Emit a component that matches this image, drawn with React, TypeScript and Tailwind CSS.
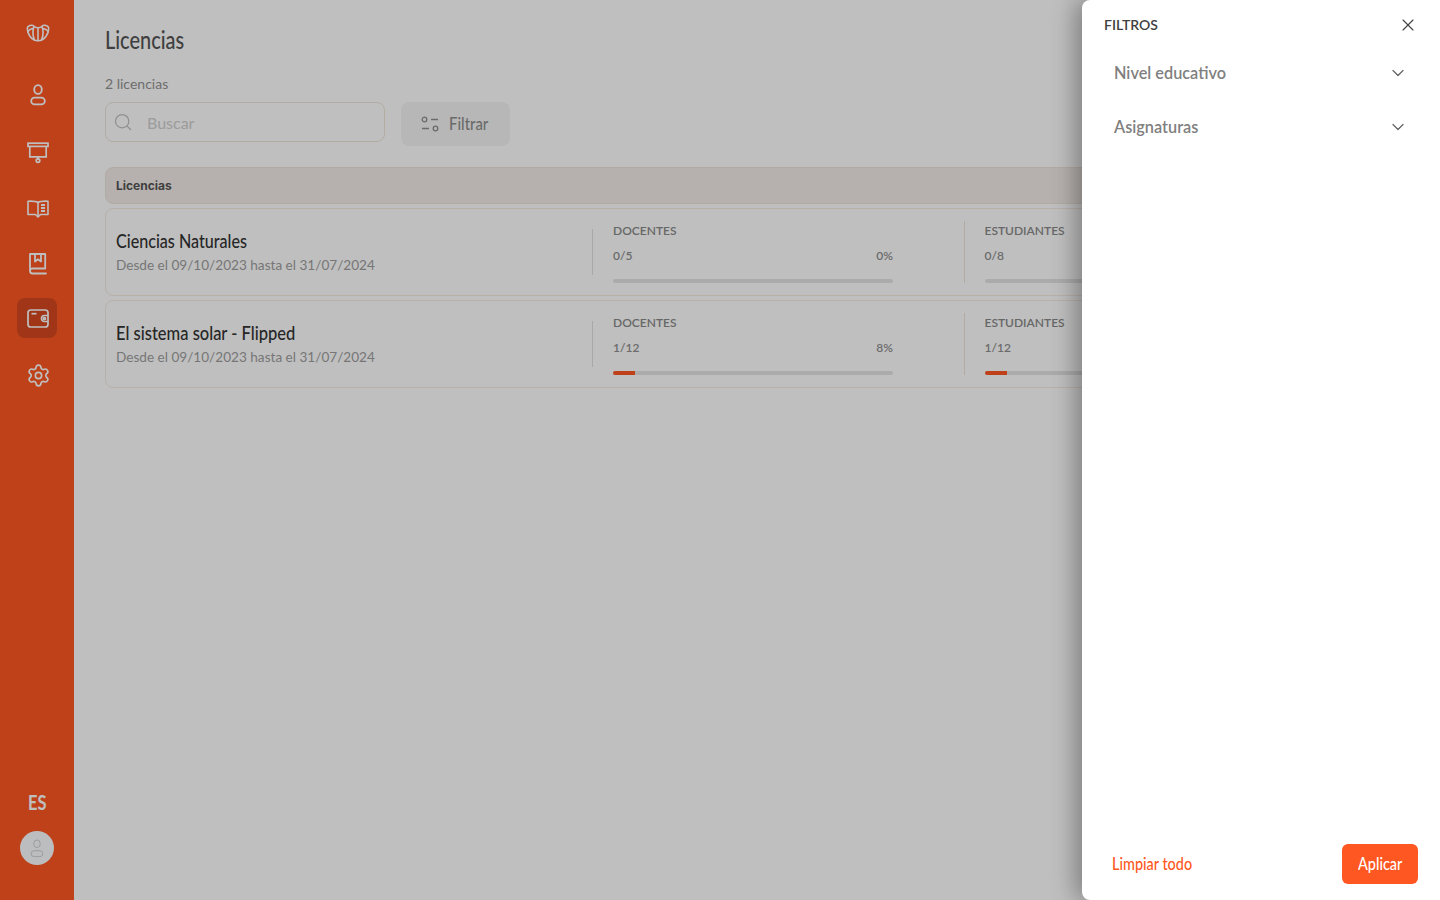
import { ChevronDown, Search, Settings, X } from "lucide-react";

const narrow = "font-['Lato',sans-serif] whitespace-nowrap origin-left font-medium";

function LogoIcon() {
  return (
    <svg width="24" height="18" viewBox="0 0 24 18" fill="none" stroke="currentColor" strokeWidth="1.6" strokeLinejoin="round" strokeLinecap="round">
      <path d="M1.600 3C3.800 .8 6.800 .9 8 2.200c1.600 2 6.400 2 8 0C17.200 .9 20.200 .8 22.400 3c1.100 5.600-3.400 13.800-10.400 13.800S.5 8.600 1.600 3Z" />
      <path d="M8 2.500c-1.400 4-1.400 9 .4 13.400M16 2.500c1.400 4 1.400 9-.4 13.400M12 4.500v12M1.800 7.500C3 6 4.500 5 6.400 4.500M22.200 7.500C21 6 19.500 5 17.600 4.500" />
    </svg>
  );
}

function UserIcon({ small = false }: { small?: boolean }) {
  return (
    <svg width={small ? 14 : 16} height={small ? 19 : 22} viewBox="0 0 16 22" fill="none" stroke="currentColor" strokeWidth={small ? 1 : 1.8}>
      <ellipse cx="8" cy="5.500" rx="3.800" ry="4.400" />
      <rect x="1.200" y="13.600" width="13.600" height="6.800" rx="3.400" />
    </svg>
  );
}

function ProjectorIcon() {
  return (
    <svg width="22" height="22" viewBox="0 0 22 22" fill="none" stroke="currentColor" strokeWidth="1.700">
      <rect x="1" y="1.200" width="20" height="3.200" />
      <path d="M2.800 4.400v10.400h16.400V4.400M11 14.800v2" />
      <circle cx="11" cy="18.600" r="1.800" />
    </svg>
  );
}

function BookOpenIcon() {
  return (
    <svg width="22" height="18" viewBox="0 0 22 18" fill="none" stroke="currentColor" strokeWidth="1.600" strokeLinejoin="round">
      <path d="M11 2.500C9.500 1.400 6 1 1 1.200v13.300h7.500L11 17l2.500-2.500H21V1.200C16 1 12.500 1.400 11 2.500Z" />
      <path d="M11 2.500V16" />
      <path d="M14 5h4M14 8h4M14 11h4" strokeWidth="2" />
    </svg>
  );
}

function BookIcon() {
  return (
    <svg width="18" height="22" viewBox="0 0 18 22" fill="none" stroke="currentColor" strokeWidth="1.800" strokeLinejoin="round" strokeLinecap="round">
      <path d="M1 17.500V1h15.200v14.500H3.500C2 15.500 1 16.400 1 17.800 1 19.400 2 20.500 3.500 20.500h13.500" />
      <path d="M6 1v7.500l3-2.200 3 2.200V1" />
    </svg>
  );
}

function WalletIcon() {
  return (
    <svg width="22" height="19" viewBox="0 0 22 19" fill="none" stroke="currentColor" strokeWidth="1.700">
      <rect x="1" y="1" width="20" height="17" rx="2.800" />
      <path d="M4.500 4.700h5" />
      <path d="M21 6.500h-3.500a3 3 0 0 0 0 6H21" />
      <circle cx="17.500" cy="9.500" r="1" />
    </svg>
  );
}

function SlidersIcon() {
  return (
    <svg width="18" height="16" viewBox="0 0 18 16" fill="none" stroke="currentColor" strokeWidth="1.300">
      <circle cx="3.500" cy="3.500" r="2.300" />
      <path d="M10 3.500h7M1 12.500h7" />
      <circle cx="14.500" cy="12.500" r="2.300" />
    </svg>
  );
}

function Stat({ label, count, pct, fill }: { label: string; count: string; pct: string; fill: number }) {
  return (
    <div className="w-[280px] shrink-0 flex flex-col text-[#8a8a8a]">
      <span className="text-[12px] leading-[16px] font-semibold">{label}</span>
      <div className="flex justify-between mt-[9px] text-[12px] leading-[16px] font-semibold text-[#909090]">
        <span>{count}</span>
        <span>{pct}</span>
      </div>
      <div className="mt-[15px] h-[4px] rounded-full bg-[#e4e4e4] overflow-hidden">
        <div className="h-full bg-[#ff5722]" style={{ width: fill + "%" }} />
      </div>
    </div>
  );
}

function Row({ title, titleScale, teachers, students }: { title: string; titleScale: string; teachers: [string, string, number]; students: [string, string, number] }) {
  return (
    <div className="h-[88px] rounded-lg border border-[#f5ece0] flex items-center pl-[10px]">
      <div className="w-[476px] shrink-0">
        <div className={`${narrow} ${titleScale} -mt-[1px] text-[20px] leading-[24px] text-[#333333]`}>{title}</div>
        <div className="mt-[3px] text-[13.6px] leading-[20px] text-[#9e9e9e]">Desde el 09/10/2023 hasta el 31/07/2024</div>
      </div>
      <div className="w-px h-[46px] bg-[#e0e0e0] shrink-0" />
      <div className="ml-[20px] pt-[2px]">
        <Stat label="DOCENTES" count={teachers[0]} pct={teachers[1]} fill={teachers[2]} />
      </div>
      <div className="ml-[71px] w-px h-[62px] bg-[#f0e6da] shrink-0" />
      <div className="ml-[19.5px] pt-[2px]">
        <Stat label="ESTUDIANTES" count={students[0]} pct={students[1]} fill={students[2]} />
      </div>
    </div>
  );
}

export default function App() {
  return (
    <div className="relative h-[900px] w-[1440px] overflow-hidden flex bg-white font-['Lato',sans-serif]">
      <aside className="w-[74px] shrink-0 bg-[#ff5722] text-white flex flex-col items-center">
        <nav className="flex flex-col items-center">
          <div className="mt-[24px] ml-[2px] h-[18px]"><LogoIcon /></div>
          <div className="mt-[42px] ml-[2px] h-[22px]"><UserIcon /></div>
          <div className="mt-[36px] ml-[2px] h-[22px]"><ProjectorIcon /></div>
          <div className="mt-[36px] ml-[2px] h-[18px]"><BookOpenIcon /></div>
          <div className="mt-[35px] ml-[2px] h-[22px]"><BookIcon /></div>
          <div className="mt-[23px] w-[40px] h-[40px] rounded-lg bg-[#d6491f] flex items-center justify-center pl-[2px]"><WalletIcon /></div>
          <Settings className="mt-[25px] ml-[2px]" size={25} strokeWidth={1.6} />
        </nav>
        <div className="mt-auto mb-[35px] flex flex-col items-center">
          <span className="text-[20px] leading-[24px] font-bold scale-x-[0.82]">ES</span>
          <div className="mt-[17px] w-[34px] h-[34px] rounded-full bg-[#fbfdff] flex items-center justify-center text-[#c8c8c8]">
            <UserIcon small />
          </div>
        </div>
      </aside>

      <main className="flex-1 min-w-0 pl-[31px] pr-[31px]">
        <h1 className={`${narrow} scale-x-[0.83] mt-[26px] text-[24px] leading-[28px] text-[#555555]`}>Licencias</h1>
        <p className="mt-[22px] text-[14px] leading-[16px] text-[#929292]">2 licencias</p>
        <div className="mt-[10px] flex items-start gap-[16px]">
          <div className="w-[280px] h-[40px] rounded-lg border border-[#f0e6da] flex items-center pl-[7px] text-[#c0c0c0]">
            <Search size={20} strokeWidth={1.5} />
            <span className="ml-[14px] pt-[1px] text-[16px] text-[#d0d0d0]">Buscar</span>
          </div>
          <div className="w-[109px] h-[44px] rounded-lg bg-[#f5f5f5] flex items-center pl-[20px] text-[#8e8e8e]">
            <SlidersIcon />
            <span className={`${narrow} scale-x-[0.83] ml-[10px] mb-[2px] w-[39px] text-[18px]`}>Filtrar</span>
          </div>
        </div>
        <div className="mt-[21px] h-[37px] rounded-lg bg-[#f3ece8] border border-[#eee5da] flex items-center pl-[10px] text-[12px] font-bold text-[#555555] font-['Inter',sans-serif]">
          Licencias
        </div>
        <div className="mt-[4px] flex flex-col gap-[4px]">
          <Row title="Ciencias Naturales" titleScale="scale-x-[0.805]" teachers={["0/5", "0%", 0]} students={["0/8", "0%", 0]} />
          <Row title="El sistema solar - Flipped" titleScale="scale-x-[0.825]" teachers={["1/12", "8%", 8]} students={["1/12", "8%", 8]} />
        </div>
      </main>

      <div className="absolute inset-0 bg-black/25" />

      <div className="absolute right-0 top-0 bottom-0 w-[358px] bg-white rounded-l-lg shadow-[-6px_0_24px_rgba(0,0,0,0.35)] flex flex-col">
        <div className="flex items-center justify-between pl-[22px] pr-[22px] pt-[15px]">
          <span className="text-[14px] leading-[20px] font-semibold text-[#404040]">FILTROS</span>
          <X size={20} strokeWidth={1.3} className="text-[#404040]" />
        </div>
        <div className="mt-[11px] flex flex-col pl-[32px] pr-[32px]">
          <div className="h-[54px] flex items-center justify-between text-[#808080]">
            <span className="text-[16.3px] font-semibold">Nivel educativo</span>
            <ChevronDown size={20} strokeWidth={1.5} className="text-[#666666]" />
          </div>
          <div className="h-[54px] flex items-center justify-between text-[#808080]">
            <span className="text-[16.3px] font-semibold">Asignaturas</span>
            <ChevronDown size={20} strokeWidth={1.5} className="text-[#666666]" />
          </div>
        </div>
        <div className="mt-auto mb-[16px] flex items-center justify-between pl-[30px] pr-[22px]">
          <span className={`${narrow} scale-x-[0.85] text-[17px] text-[#ff5722]`}>Limpiar todo</span>
          <div className="w-[76px] h-[40px] rounded-md bg-[#ff5722] text-white flex items-center pl-[16px]">
            <span className={`${narrow} scale-x-[0.85] w-[44px] text-[17px]`}>Aplicar</span>
          </div>
        </div>
      </div>
    </div>
  );
}
